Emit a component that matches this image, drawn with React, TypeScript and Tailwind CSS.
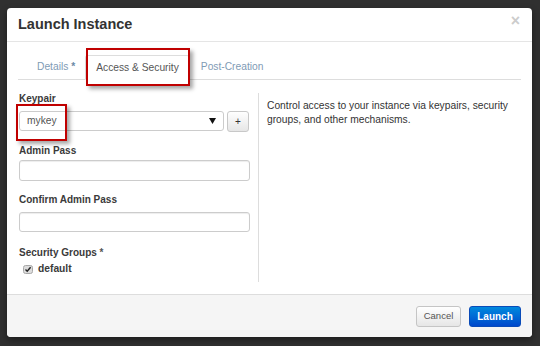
import React from 'react';

const font = { fontFamily: '"Liberation Sans", Arial, sans-serif' };

const Label = ({ children, className = '' }: { children: React.ReactNode; className?: string }) => (
  <div className={`text-[10px] leading-[12px] font-bold text-[#3a3a3a] ${className}`}>{children}</div>
);

const TextInput = ({ className = '' }: { className?: string }) => (
  <div
    className={`w-[231px] rounded-[3px] border border-[#cccccc] bg-white shadow-[inset_0_1px_1px_rgba(0,0,0,0.075)] ${className}`}
  />
);

const App = () => {
  return (
    <div className="relative w-[540px] h-[346px] overflow-hidden bg-[#303030] pt-[8px] pl-[7px]" style={font}>
      {/* modal */}
      <div className="w-[525px] h-[329px] flex flex-col bg-white rounded-[4px] shadow-[0_3px_7px_rgba(0,0,0,0.4)]">
        {/* header */}
        <div className="h-[34px] shrink-0 flex justify-between border-b border-[#e5e5e5] pl-[11px] pr-[12px]">
          <div className="pt-[8px] text-[14.5px] leading-[16px] font-bold text-[#333]">Launch Instance</div>
          <div className="mt-[5px] text-[16px] leading-[16px] font-bold text-[#cccccc]">×</div>
        </div>

        {/* body */}
        <div className="flex-1 px-[11px]">
          {/* tabs */}
          <div className="mt-[13px] h-[25px] flex items-end border-b border-[#dddddd] pl-[9px]">
            <div className="h-[24px] px-[10px] text-[10.25px] leading-[24px] text-[#7f9bb5]">
              Details <span className="font-bold text-[#6c8aa6]">*</span>
            </div>
            <div className="h-[25px] -mb-[1px] px-[10px] border border-[#dddddd] border-b-white rounded-t-[3px] bg-white text-[10.25px] leading-[24px] text-[#555]">
              Access &amp; Security
            </div>
            <div className="h-[24px] px-[11px] text-[10.25px] leading-[24px] text-[#7f9bb5]">Post-Creation</div>
          </div>

          {/* content */}
          <div className="mt-[13px] h-[189px] flex">
            <div className="w-[240px] pl-[1px]">
              <Label>Keypair</Label>
              <div className="mt-[6px] h-[21px] flex items-start">
                <div className="w-[205px] h-[20px] flex items-center justify-between rounded-[3px] border border-[#cccccc] bg-white pl-[7px] pr-[7px]">
                  <span className="text-[10.25px] text-[#555]">mykey</span>
                  <svg width="7" height="6" viewBox="0 0 7 6">
                    <path d="M0 0 H7 L3.5 6 Z" fill="#111" />
                  </svg>
                </div>
                <div className="ml-[3px] w-[22px] h-[21px] flex items-center justify-center rounded-[3px] border border-[#c8c8c8] bg-linear-to-b from-white to-[#e6e6e6] text-[10px] leading-none text-[#333]">
                  +
                </div>
              </div>

              <Label className="mt-[13px]">Admin Pass</Label>
              <TextInput className="mt-[3px] h-[21px]" />

              <Label className="mt-[13px]">Confirm Admin Pass</Label>
              <TextInput className="mt-[6px] h-[20px]" />

              <Label className="mt-[15px]">
                Security Groups <span className="text-[#555]">*</span>
              </Label>
              <div className="mt-[4px] h-[12px] flex items-center pl-[4px]">
                <svg width="10" height="9" viewBox="0 0 10 9">
                  <rect x="0.5" y="0.5" width="9" height="8" rx="2" fill="#dcdcdc" stroke="#a8a8a8" />
                  <path d="M2.5 4.6 L4.2 6.3 L7.6 2.2" fill="none" stroke="#222" strokeWidth="1.4" />
                </svg>
                <span className="ml-[5px] text-[10.25px] font-bold text-[#3a3a3a]">default</span>
              </div>
            </div>

            <div className="flex-1 border-l border-[#dddddd] pl-[8px] pt-[6px]">
              <p className="text-[10.25px] leading-[14px] text-[#333] w-[250px]">
                Control access to your instance via keypairs, security groups, and other mechanisms.
              </p>
            </div>
          </div>
        </div>

        {/* footer */}
        <div className="h-[43px] shrink-0 flex justify-end items-start gap-[8px] border-t border-[#dddddd] bg-[#f5f5f5] rounded-b-[4px] pt-[11px] pr-[11px]">
          <div className="w-[45px] h-[21px] flex items-center justify-center rounded-[3px] border border-[#c5c5c5] bg-linear-to-b from-white to-[#e6e6e6] text-[9.5px] text-[#555]">
            Cancel
          </div>
          <div className="w-[52px] h-[21px] flex items-center justify-center rounded-[3px] border border-[#0a4bb8] bg-linear-to-b from-[#0088dd] to-[#0048cc] text-[10px] font-bold text-white">
            Launch
          </div>
        </div>
      </div>

      {/* annotation boxes */}
      <div className="absolute left-[86px] top-[48px] w-[104px] h-[38px] border-2 border-[#c00000] shadow-[3px_3px_4px_rgba(0,0,0,0.35)]" />
      <div className="absolute left-[16px] top-[104px] w-[51px] h-[37px] border-2 border-[#c00000] shadow-[3px_3px_4px_rgba(0,0,0,0.35)]" />
    </div>
  );
};

export default App;
